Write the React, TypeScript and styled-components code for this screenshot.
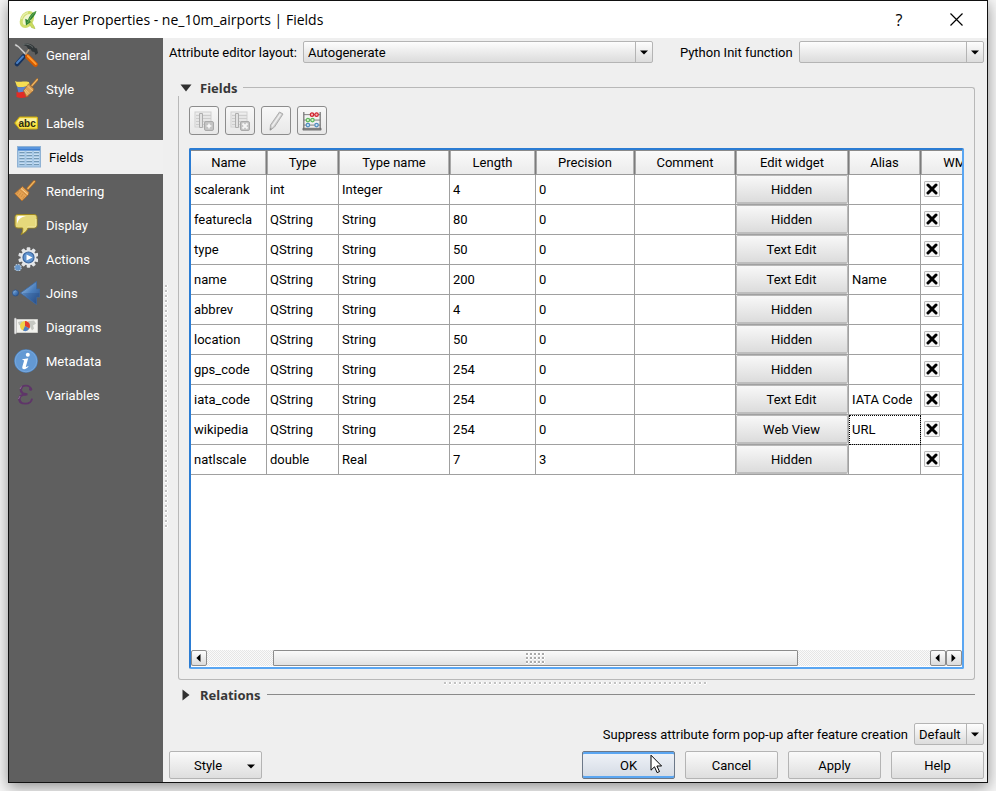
import React from "react";
import styled, { createGlobalStyle, css } from "styled-components";

const GlobalStyle = createGlobalStyle`
  *, *::before, *::after { box-sizing: border-box; }
  body {
    margin: 0;
    background: #f6f6f6;
    color: #000;
    font: 13px/16px Roboto, "Noto Sans", sans-serif;
  }
  button, select, input { font: inherit; color: inherit; margin: 0; }
`;

const raised = "linear-gradient(#fdfdfd, #ececec 50%, #dcdcdc)";

const Desktop = styled.div`
  display: flex;
  min-height: 100vh;
  padding: 0 8px 8px;
`;

const Dialog = styled.main`
  flex: 1;
  min-width: 0;
  display: flex;
  flex-direction: column;
  border: 1px solid #111;
  background: #efefef;
  box-shadow: 0 4px 14px rgba(0, 0, 0, 0.42);
`;

const TitleBar = styled.header`
  display: flex;
  align-items: center;
  height: 37px;
  padding: 0 8px 0 10px;
  background: #fff;
`;

const Title = styled.h1`
  flex: 1;
  margin: 0 0 0 6px;
  font: 14px/20px "Open Sans", sans-serif;
`;

const TitleButton = styled.button`
  display: grid;
  place-items: center;
  width: 68px;
  height: 36px;
  padding: 0;
  border: 0;
  background: none;
  font: 16px/20px "Open Sans", sans-serif;
  &:last-child { width: 46px; }
`;

const Body = styled.div`
  flex: 1;
  display: flex;
  min-height: 0;
`;

const Sidebar = styled.nav`
  flex: none;
  width: 154px;
  background: #5f5f5f;
`;

const NavItem = styled.a<{ $active?: boolean }>`
  display: grid;
  grid-template-columns: 24px 1fr;
  align-items: center;
  gap: 8px;
  height: 34px;
  padding-left: ${(p) => (p.$active ? 8 : 5)}px;
  background: ${(p) => (p.$active ? "#f0f0f0" : "transparent")};
  color: ${(p) => (p.$active ? "#000" : "#fff")};
  line-height: 18px;
  text-decoration: none;
  svg { justify-self: center; }
`;

const NavText = styled.span`
  padding-top: 2px;
`;

const dotted = css`
  background-image: radial-gradient(circle at 1px 1px, #c2c2c2 1px, #fff 1px, #fff 2px, transparent 2px);
  background-size: 5px 5px;
`;

const SideGrip = styled.div`
  flex: none;
  align-self: center;
  width: 3px;
  height: 244px;
  margin: 0 1px 6px 2px;
  ${dotted}
`;

const BottomGrip = styled.div`
  align-self: center;
  width: 264px;
  height: 3px;
  margin: 2px 2px 2px 0;
  ${dotted}
`;

const Content = styled.div`
  flex: 1;
  min-width: 0;
  display: flex;
  flex-direction: column;
  padding: 3px 3px 3px 0;
`;

const OptionRow = styled.div`
  display: flex;
  align-items: center;
`;

const Label = styled.label`
  flex: none;
  margin-right: 6px;
  padding-top: 2px;
  white-space: nowrap;
`;

const OptionGap = styled.div`
  width: 27px;
`;

const ComboFrame = styled.div<{ $grow: number }>`
  display: grid;
  flex: ${(p) => (p.$grow ? `${p.$grow} 1 0` : "none")};
  width: ${(p) => (p.$grow ? "auto" : "70px")};
  height: 22px;
  border: 1px solid #b4b4b4;
  border-radius: 2px;
  background: ${raised};
`;

const ComboSelect = styled.select`
  grid-area: 1 / 1;
  min-width: 0;
  height: 20px;
  padding: 2px 18px 0 4px;
  border: 0;
  background: none;
  appearance: none;
`;

const ComboArrow = styled.span`
  grid-area: 1 / 1;
  justify-self: end;
  display: grid;
  place-items: center;
  width: 17px;
  border-left: 1px solid #b4b4b4;
  pointer-events: none;
`;

const ArrowDown = () => (
  <svg width="8" height="5" viewBox="0 0 8 5"><path d="M0 .5h8L4 4.6z" /></svg>
);

function Combo({ id, value, grow = 0 }: { id: string; value: string; grow?: number }) {
  return (
    <ComboFrame $grow={grow}>
      <ComboSelect id={id} defaultValue={value}><option>{value}</option></ComboSelect>
      <ComboArrow><ArrowDown /></ComboArrow>
    </ComboFrame>
  );
}

const FieldsGroup = styled.section`
  flex: 1;
  min-height: 0;
  display: flex;
  flex-direction: column;
  margin: 17px 9px 0;
`;

const GroupHeader = styled.div`
  display: flex;
  align-items: center;
  height: 16px;
`;

const GroupToggle = styled.button`
  display: flex;
  align-items: center;
  gap: 8px;
  height: 16px;
  padding: 0 6px 0 2px;
  border: 0;
  background: none;
  font: bold 13px/16px "Noto Sans", sans-serif;
  color: #383838;
`;

const GroupRule = styled.span<{ $dark?: boolean }>`
  flex: 1;
  align-self: flex-start;
  height: 9px;
  margin-top: 7px;
  border-top: 1px solid ${(p) => (p.$dark ? "#8a8a8a" : "#b8b8b8")};
  border-right: ${(p) => (p.$dark ? "0" : "1px solid #b8b8b8")};
  border-top-right-radius: ${(p) => (p.$dark ? 0 : 3)}px;
`;

const GroupBody = styled.div`
  flex: 1;
  min-height: 0;
  display: flex;
  flex-direction: column;
  padding: 10px;
  border: 1px solid #b8b8b8;
  border-top: 0;
  border-radius: 0 0 3px 3px;
`;

const Toolbar = styled.div`
  display: flex;
  gap: 6px;
  margin-bottom: 13px;
`;

const ToolButton = styled.button`
  display: grid;
  place-items: center;
  width: 30px;
  height: 29px;
  padding: 0;
  border: 1px solid #8c8c8c;
  border-radius: 3px;
  background: linear-gradient(#f8f8f8, #e8e8e8);
`;

const TableFrame = styled.div`
  flex: 1;
  min-height: 0;
  display: flex;
  flex-direction: column;
  border: 2px solid #5aa6f2;
  border-top-color: #2b7cd3;
  border-left-color: #2b7cd3;
  border-radius: 2px;
  background: #fff;
`;

const TableViewport = styled.div`
  flex: 1;
  min-height: 0;
  overflow: hidden;
`;

const Table = styled.table`
  table-layout: fixed;
  width: 806px;
  border-collapse: separate;
  border-spacing: 0;
`;

const HeadCell = styled.th<{ $width: number }>`
  width: ${(p) => p.$width}px;
  height: 25px;
  padding: 0;
  border-top: 1px solid #8a8a8a;
  border-right: 1px solid #7c7c7c;
  border-bottom: 1px solid #9a9a9a;
  background: linear-gradient(#fafafa, #ebebeb);
  box-shadow: inset -1px 0 #b0b0b0, inset 1px 0 #a8a8a8;
  font-weight: 400;
  &:first-child { box-shadow: inset -1px 0 #b0b0b0; }
`;

const Cell = styled.td<{ $focused?: boolean; $flush?: boolean }>`
  height: 30px;
  padding: ${(p) => (p.$flush ? 0 : "0 3px")};
  border-right: 1px solid #a0a0a0;
  border-bottom: 1px solid #a0a0a0;
  outline: ${(p) => (p.$focused ? "1px dotted #000" : "none")};
  outline-offset: -1px;
  white-space: nowrap;
`;

const WidgetButton = styled.button`
  display: block;
  width: 100%;
  height: 29px;
  padding: 2px 1px 0 0;
  border: 1px solid #b8b8b8;
  border-bottom: 2px solid #bdbdbd;
  border-radius: 2px;
  background: linear-gradient(#f8f8f8, #eaeaea 50%, #dcdcdc);
`;

const TickFrame = styled.span`
  display: grid;
  width: 16px;
  height: 16px;
  margin-bottom: 2px;
  svg { grid-area: 1 / 1; place-self: center; visibility: hidden; pointer-events: none; }
  input:checked + svg { visibility: visible; }
`;

const TickBox = styled.input`
  grid-area: 1 / 1;
  width: 16px;
  height: 16px;
  appearance: none;
  border: 1px solid #bcbcbc;
  border-radius: 1px;
  background: #f6f6f6;
`;

const ScrollBar = styled.div`
  flex: none;
  display: flex;
  height: 16px;
  margin-bottom: 1px;
  background: repeating-conic-gradient(#e6e6e6 0 25%, #fafafa 0 50%) 0 0 / 2px 2px;
`;

const ScrollButton = styled.button`
  display: grid;
  place-items: center start;
  width: 16px;
  padding: 0 0 0 4px;
  border: 1px solid #8c8c8c;
  border-radius: 2px;
  background: ${raised};
`;

const ScrollTrack = styled.div<{ $grow: number }>`
  flex: ${(p) => p.$grow} 1 0;
`;

const ScrollThumb = styled.div`
  display: grid;
  place-items: center;
  flex: 525 1 0;
  border: 1px solid #8c8c8c;
  border-radius: 1px;
  background: linear-gradient(#fafafa, #e2e2e2);
`;

const ThumbGrip = styled.span`
  width: 19px;
  height: 11px;
  background-image: radial-gradient(circle at 1px 1px, #aaa 1px, #fff 1px, #fff 2px, transparent 2px);
  background-size: 4px 4px;
`;

const RelationsGroup = styled.section`
  margin: 0 9px 20px;
`;

const SuppressRow = styled(OptionRow)`
  justify-content: flex-end;
  margin-bottom: 6px;
`;

const Footer = styled.footer`
  display: flex;
  gap: 10px;
`;

const PushButton = styled.button<{ $primary?: boolean }>`
  display: flex;
  align-items: center;
  justify-content: center;
  width: 93px;
  height: 28px;
  padding: 2px 0 0;
  border: 1px solid ${(p) => (p.$primary ? "#6c7888" : "#b4b4b4")};
  border-radius: 2px;
  background: ${(p) => (p.$primary ? "linear-gradient(#f0f3f8, #d3dae4)" : "linear-gradient(#fafafa, #ececec 50%, #dedede)")};
  box-shadow: ${(p) => (p.$primary ? "inset 0 2px #5aa6f2, inset 0 -2px #5aa6f2" : "none")};
`;

const MenuButton = styled(PushButton)`
  margin-right: auto;
  justify-content: space-between;
  padding: 2px 6px 0 24px;
`;

const PointerLayer = styled.svg`
  position: absolute;
  right: 12px;
  top: 3px;
  pointer-events: none;
`;

const PointerHost = styled.span`
  position: relative;
  display: flex;
`;

/* ---------- icons ---------- */

const Icon = ({ children, size = 24 }: { children: React.ReactNode; size?: number }) => (
  <svg width={size} height={size} viewBox="0 0 24 24" fill="none" aria-hidden="true">{children}</svg>
);

const AppIcon = () => (
  <svg width="18" height="20" viewBox="0 0 18 20" fill="none" aria-hidden="true">
    <path d="M10.500 2.500C6 2.500 2.500 6.500 2.200 11.500c-.2 3 1.300 5 4 5 4 0 7.300-4.500 7.500-9.500.1-2.800-1-4.500-3.200-4.500z" fill="#f2f6cf" stroke="#cfde6c" strokeWidth="3" />
    <path d="M2.500 9C3.500 5.500 6 3.200 9 2.600" stroke="#e6eeae" strokeWidth="1.400" />
    <path d="M9.500 12.500l3 5 3.500 1.200-1-2.500-2.500-4z" fill="#cbdc5e" stroke="#a9be45" strokeWidth=".6" />
    <path d="M17.500 1C13.500 2 10.500 5.500 9 10L6.200 8.700 7 15.500l5-3.800-1.500-.7C13.500 8.500 16.500 5 17.500 1z" fill="#2f8434" />
    <path d="M17 1.500C13.500 4 11 7.500 8.500 13" stroke="#83bb62" strokeWidth=".7" />
  </svg>
);

const GeneralIcon = () => (
  <Icon>
    <path d="M1.500 1l3 2 9 9-1 1L4 4 1 2.500z" fill="#e8e8e8" stroke="#aaa" strokeWidth=".5" />
    <path d="M8 1.500C12-.3 17 0 20 3.500l1 1.500 2 .5 1 4.500-2.500 2-1-3-2.500-.5-1.500-2.500-2 .2-2-3z" fill="#303638" />
    <path d="M8.500 1.500c4-1 7.500 0 10.500 3" stroke="#69706f" />
    <path d="M15 6.500L11 12" stroke="#b8a080" strokeWidth="1.600" />
    <path d="M9.500 13.500l-6.500 7.500" stroke="#16335f" strokeWidth="4.600" strokeLinecap="round" />
    <path d="M9 13.500l-6 6.500" stroke="#4a80c4" strokeWidth="2" strokeLinecap="round" />
    <path d="M13.500 13.500l8 8" stroke="#d45a00" strokeWidth="4.600" strokeLinecap="round" />
    <path d="M13.800 13l8 8" stroke="#ff9a2e" strokeWidth="1.800" strokeLinecap="round" />
  </Icon>
);

const StyleIcon = () => (
  <Icon>
    <path d="M1 4c4 2 7-.5 14 1l1 5c-5-2-9 2-13-.5z" fill="#f5dd52" />
    <path d="M3 9.500c4 2.500 8-1.500 12 .5l-1 6c-4-1-6 1-9.500 0z" fill="#5b83cf" />
    <path d="M2.500 15c4 1.500 6-1.500 10 0l2 4.500c-4 1.500-8 2-12 .5z" fill="#e32b25" />
    <path d="M23.300 2.500L18 8.500" stroke="#a9692b" strokeWidth="2.600" strokeLinecap="round" />
    <path d="M23.300 2.500L18 8.500" stroke="#edb764" strokeWidth="1.200" strokeLinecap="round" />
    <path d="M14.500 7l5.500 5-1.500 2.500-6 5.500-3-6.500z" fill="#dda154" stroke="#9c642a" strokeWidth=".7" />
    <path d="M13.500 9l5.500 5M11.500 12.500l3.500 4M10.500 13.500l3 4" stroke="#f4cc8a" strokeWidth=".8" />
  </Icon>
);

const LabelsIcon = () => (
  <Icon>
    <path d="M.7 12L5.500 6H22.500c.7 0 1 .3 1 1v10c0 .7-.3 1-1 1H5.500z" fill="#f5df46" stroke="#c9a80e" />
    <path d="M6 7.300h16.300v4.200H3z" fill="#fbf09a" />
    <text x="4.500" y="15.500" fontFamily="Liberation Sans, sans-serif" fontWeight="bold" fontSize="10" fill="#2c2a12">abc</text>
  </Icon>
);

const FieldsIcon = () => (
  <Icon>
    <rect x=".5" y="1.500" width="23" height="20.500" fill="#a9c9e6" stroke="#8fb2d4" />
    <rect x="1" y="2" width="22" height="3.500" fill="#3f7fd0" />
    <path d="M1 3h22" stroke="#77aeea" />
    {[7.5, 10.500, 13.500, 16.500, 19.500].map((y) => (
      <React.Fragment key={y}>
        <path d={`M2.500 ${y - 1}h5M9.500 ${y - 1}h5.500M17 ${y - 1}h5`} stroke="#c8def1" />
        <path d={`M2.500 ${y}h5M9.500 ${y}h5.500M17 ${y}h5`} stroke="#7599b5" />
      </React.Fragment>
    ))}
  </Icon>
);

const BroomIcon = () => (
  <Icon>
    <path d="M20.300 2.500L14 9.500" stroke="#a9692b" strokeWidth="3" strokeLinecap="round" />
    <path d="M20.300 2.500L14 9.500" stroke="#f0b55c" strokeWidth="1.400" strokeLinecap="round" />
    <path d="M8.500 7.500l6.500 6-1 2.500-6 6L.7 14.500z" fill="#e5a252" stroke="#a9692b" strokeWidth=".8" />
    <path d="M5 12l-2 3M7 13.500l-2 3M9 15l-2 3M10.500 17l-2 3.500" stroke="#c98a40" strokeWidth=".8" />
    <path d="M7 9.500l7 6" stroke="#f8d396" />
    <path d="M6 10.700l7 6" stroke="#b87838" strokeWidth=".6" />
  </Icon>
);

const DisplayIcon = () => (
  <Icon>
    <path d="M4 1.500h16c2 0 3 1 3 3V12c0 2-1 3-3 3h-6c-1 3-3 5-7 6.500 1.500-2 2-4 1.700-6.500H4c-2 0-3-1-3-3V4.500c0-2 1-3 3-3z" fill="#e6d97b" stroke="#9c8520" />
    <path d="M3 11V5c0-1.500.6-2 2-2h7C7 4 4.500 6 3 11z" fill="#fff" />
    <path d="M13.500 14h6.500c1.300 0 2-.7 2-2V6" stroke="#f2e9a8" />
  </Icon>
);

const teeth = Array.from({ length: 10 }, (_, i) => i * 36);

const ActionsIcon = () => (
  <Icon>
    {teeth.map((a) => (
      <rect key={a} x="12.700" y=".2" width="3.600" height="5" rx="1" fill="#e3e5e7" transform={`rotate(${a} 14.500 10.500)`} />
    ))}
    <circle cx="14.500" cy="10.500" r="7.800" fill="#e6e8ea" />
    <circle cx="14.500" cy="10.500" r="5.500" fill="#5f93cf" stroke="#3c659c" strokeWidth="1.200" />
    <path d="M12.500 7.500l6 3-6 3z" fill="#fff" />
    <circle cx="3.900" cy="20.700" r="3.200" fill="#7ea7d0" stroke="#c2cdd8" strokeWidth="1.300" strokeDasharray="1.400 1.100" />
    <circle cx="3.900" cy="20.700" r="2.600" fill="#6695c8" />
  </Icon>
);

const JoinsIcon = () => (
  <svg width="28" height="24" viewBox="0 0 28 24" fill="none" aria-hidden="true">
    <defs>
      <linearGradient id="join" x1="0" y1="0" x2="1" y2="1">
        <stop stopColor="#a9cbed" /><stop offset=".5" stopColor="#4b7fbd" /><stop offset="1" stopColor="#264d8a" />
      </linearGradient>
    </defs>
    <circle cx="3.500" cy="12" r="3" fill="url(#join)" stroke="#284f86" strokeWidth=".8" />
    <path d="M8.500 12L24.500.5V8h3v8h-3v7.500z" fill="url(#join)" stroke="#3b6aa5" strokeWidth=".8" />
    <path d="M10 12h17.500v4h-3v7z" fill="#203f75" opacity=".25" />
  </svg>
);

const DiagramsIcon = () => (
  <Icon>
    <path d="M2.500 4.500h21v13h-21z" fill="#f2f2ee" stroke="#cfcfcb" />
    <path d="M4 7l4-1 2 2-2 3-3-1zM14 6l6-.5 2 3-3 2 1 3-2 2-2-4-2-2z" fill="#c6c8c2" />
    <rect x=".3" y="3" width="2" height="16" rx="1" fill="#eee" stroke="#aaa" strokeWidth=".5" />
    <circle cx="11" cy="11" r="5" fill="#efd34a" />
    <path d="M11 11V6A5 5 0 0 1 15.300 13.500z" fill="#e23c2e" />
    <path d="M11 11l4.300 2.500a5 5 0 0 1-6.300 2.100z" fill="#4e7fc4" />
  </Icon>
);

const MetadataIcon = () => (
  <Icon>
    <circle cx="12" cy="12" r="11.800" fill="#4d86c6" />
    <circle cx="12" cy="12" r="10.800" fill="#6399d4" stroke="#8bb5e2" strokeWidth=".6" />
    <circle cx="13.800" cy="5.800" r="2" fill="#fff" />
    <path d="M8.500 10.200l5.700-.9-2.300 8.200c-.2.900.7.700 2.200-.5l.4.600c-1.600 1.800-3 2.600-4.300 2.600-1.700 0-2.300-1-1.800-2.800l1.600-5.500c.2-.8-.5-1-1.700-1z" fill="#fff" />
  </Icon>
);

const VariablesIcon = () => (
  <Icon>
    <path d="M17 6.500C16.500 3.800 14.500 2.700 12 2.700 9 2.700 7 4.300 7 6.800c0 2.700 2 4.200 5.500 4.200M12.500 11.500C8 11.500 5.300 13 5.300 16c0 3 2.700 4.600 6 4.600 3.700 0 6.300-1.800 6.700-5" stroke="#5f3569" strokeWidth="1.800" />
    <path d="M8.200 4C6.700 5.500 6.500 8 8.200 10M6.500 13c-1.700 2-1.400 4.700.5 6.300" stroke="#5f3569" strokeWidth="2.200" />
    <path d="M10 11.300h3.500" stroke="#5f3569" strokeWidth="2" />
    <path d="M6 6l1.500-2.500M4.500 16l1.500-3" stroke="#a58aac" strokeWidth=".7" />
    <circle cx="16.600" cy="6.200" r="1.600" fill="#5f3569" />
  </Icon>
);

const TableGlyph = ({ remove = false }: { remove?: boolean }) => (
  <svg width="20" height="20" viewBox="0 0 20 20" fill="none" aria-hidden="true">
    <rect x="1" y="1" width="16" height="15" fill="#eee" stroke="#d0d0d0" />
    <path d="M2 4.500h15M2 7.500h15M2 10.500h15M2 13.500h15" stroke="#cdcdcd" strokeWidth="1.600" />
    <path d="M5.500 2.500h3v14h-3z" fill="#e2e2e2" stroke="#aeaeae" />
    <rect x="10.500" y="10.500" width="9" height="9" rx="1.500" fill="#c4c4c4" stroke="#aaa" />
    {remove
      ? <path d="M12.500 12.500l5 5M17.500 12.500l-5 5" stroke="#f5f5f5" strokeWidth="1.800" />
      : <path d="M15 11.800l1 2.200 2.200 1-2.200 1-1 2.200-1-2.200-2.200-1 2.200-1z" fill="#f8f8f8" />}
  </svg>
);

const PencilGlyph = () => (
  <svg width="20" height="20" viewBox="0 0 20 20" fill="none" aria-hidden="true">
    <path d="M13.500 1l3.500 2L8.500 16 4 19.300 4.500 14z" fill="#cecece" stroke="#adadad" />
    <path d="M14.500 3L6 15.500" stroke="#efefef" strokeWidth="1.400" />
    <path d="M4 19.300l.3-2.300 1.700.9z" fill="#8c8c8c" />
  </svg>
);

const AbacusGlyph = () => (
  <svg width="20" height="20" viewBox="0 0 22 22" fill="none" aria-hidden="true">
    <path d="M2 1v19M20 1v19" stroke="#6e6e6e" strokeWidth="1.300" />
    <path d="M2 4h18M2 10h18M2 15.500h18" stroke="#777" />
    <path d="M1 19h20v2H1z" fill="#8a8a8a" stroke="#5c5c5c" strokeWidth=".7" />
    <g strokeWidth="1.300">
      <circle cx="11" cy="4" r="1.900" fill="#f7b8b8" stroke="#d0202c" /><circle cx="16" cy="4" r="1.900" fill="#f7b8b8" stroke="#d0202c" />
      <circle cx="6.500" cy="10" r="1.900" fill="#d5f1d0" stroke="#5fb85c" /><circle cx="11.500" cy="10" r="1.900" fill="#d5f1d0" stroke="#5fb85c" />
      <circle cx="6.500" cy="15.500" r="1.900" fill="#cfe5f7" stroke="#4f8dc0" /><circle cx="16" cy="15.500" r="1.900" fill="#cfe5f7" stroke="#4f8dc0" />
    </g>
  </svg>
);

const TickMark = () => (
  <svg width="12" height="12" viewBox="0 0 12 12"><path d="M2 2l8 8M10 2l-8 8" stroke="#000" strokeWidth="3" strokeLinecap="round" /></svg>
);

const SideArrow = ({ right = false }: { right?: boolean }) => (
  <svg width="5" height="8" viewBox="0 0 5 8"><path d={right ? "M.5 0v8L4.600 4z" : "M4.500 0v8L.4 4z"} /></svg>
);

const MousePointer = () => (
  <PointerLayer width="13" height="21" viewBox="0 0 13 21">
    <path d="M1 1.200v15l3.500-3.400 2.600 5.800 2.400-1-2.600-5.600h4.700z" fill="#fff" stroke="#000" />
  </PointerLayer>
);

/* ---------- data ---------- */

const pages = [
  { name: "General", icon: <GeneralIcon /> },
  { name: "Style", icon: <StyleIcon /> },
  { name: "Labels", icon: <LabelsIcon /> },
  { name: "Fields", icon: <FieldsIcon /> },
  { name: "Rendering", icon: <BroomIcon /> },
  { name: "Display", icon: <DisplayIcon /> },
  { name: "Actions", icon: <ActionsIcon /> },
  { name: "Joins", icon: <JoinsIcon /> },
  { name: "Diagrams", icon: <DiagramsIcon /> },
  { name: "Metadata", icon: <MetadataIcon /> },
  { name: "Variables", icon: <VariablesIcon /> },
];

const columns: [string, number][] = [
  ["Name", 76], ["Type", 72], ["Type name", 111], ["Length", 86], ["Precision", 99],
  ["Comment", 101], ["Edit widget", 113], ["Alias", 72], ["WMS", 76],
];

const fields = [
  ["scalerank", "int", "Integer", "4", "0", "", "Hidden", ""],
  ["featurecla", "QString", "String", "80", "0", "", "Hidden", ""],
  ["type", "QString", "String", "50", "0", "", "Text Edit", ""],
  ["name", "QString", "String", "200", "0", "", "Text Edit", "Name"],
  ["abbrev", "QString", "String", "4", "0", "", "Hidden", ""],
  ["location", "QString", "String", "50", "0", "", "Hidden", ""],
  ["gps_code", "QString", "String", "254", "0", "", "Hidden", ""],
  ["iata_code", "QString", "String", "254", "0", "", "Text Edit", "IATA Code"],
  ["wikipedia", "QString", "String", "254", "0", "", "Web View", "URL"],
  ["natlscale", "double", "Real", "7", "3", "", "Hidden", ""],
];

function FieldsTable() {
  return (
    <TableFrame>
      <TableViewport>
        <Table>
          <thead>
            <tr>{columns.map(([name, width]) => <HeadCell key={name} $width={width} scope="col">{name}</HeadCell>)}</tr>
          </thead>
          <tbody>
            {fields.map((row) => (
              <tr key={row[0]}>
                {row.map((value, i) =>
                  i === 6 ? (
                    <Cell key={i} $flush><WidgetButton>{value}</WidgetButton></Cell>
                  ) : (
                    <Cell key={i} $focused={value === "URL"}>{value}</Cell>
                  )
                )}
                <Cell>
                  <TickFrame>
                    <TickBox type="checkbox" defaultChecked aria-label={`Publish ${row[0]} through WMS`} />
                    <TickMark />
                  </TickFrame>
                </Cell>
              </tr>
            ))}
          </tbody>
        </Table>
      </TableViewport>
      <ScrollBar>
        <ScrollButton aria-label="Scroll left"><SideArrow /></ScrollButton>
        <ScrollTrack $grow={66} />
        <ScrollThumb><ThumbGrip /></ScrollThumb>
        <ScrollTrack $grow={132} />
        <ScrollButton aria-label="Scroll left"><SideArrow /></ScrollButton>
        <ScrollButton aria-label="Scroll right"><SideArrow right /></ScrollButton>
      </ScrollBar>
    </TableFrame>
  );
}

export default function App() {
  return (
    <>
      <GlobalStyle />
      <Desktop>
        <Dialog>
          <TitleBar>
            <AppIcon />
            <Title>Layer Properties - ne_10m_airports | Fields</Title>
            <TitleButton aria-label="What's this?">?</TitleButton>
            <TitleButton aria-label="Close">
              <svg width="13" height="13" viewBox="0 0 13 13"><path d="M.5 .5l12 12M12.500 .5l-12 12" stroke="#000" strokeWidth="1.200" /></svg>
            </TitleButton>
          </TitleBar>
          <Body>
            <Sidebar>
              {pages.map((p) => (
                <NavItem key={p.name} href="#" $active={p.name === "Fields"}>
                  {p.icon}
                  <NavText>{p.name}</NavText>
                </NavItem>
              ))}
            </Sidebar>
            <SideGrip />
            <Content>
              <OptionRow>
                <Label htmlFor="layout">Attribute editor layout:</Label>
                <Combo id="layout" value="Autogenerate" grow={351} />
                <OptionGap />
                <Label htmlFor="init">Python Init function</Label>
                <Combo id="init" value="" grow={185} />
              </OptionRow>
              <FieldsGroup>
                <GroupHeader>
                  <GroupToggle aria-expanded="true">
                    <svg width="12" height="8" viewBox="0 0 12 8"><path d="M.5 .5h11L6 7.500z" fill="#303030" /></svg>
                    Fields
                  </GroupToggle>
                  <GroupRule />
                </GroupHeader>
                <GroupBody>
                  <Toolbar>
                    <ToolButton disabled aria-label="New column"><TableGlyph /></ToolButton>
                    <ToolButton disabled aria-label="Delete column"><TableGlyph remove /></ToolButton>
                    <ToolButton disabled aria-label="Toggle editing"><PencilGlyph /></ToolButton>
                    <ToolButton aria-label="Field calculator"><AbacusGlyph /></ToolButton>
                  </Toolbar>
                  <FieldsTable />
                </GroupBody>
              </FieldsGroup>
              <BottomGrip />
              <RelationsGroup>
                <GroupHeader>
                  <GroupToggle aria-expanded="false">
                    <svg width="12" height="12" viewBox="0 0 12 12"><path d="M2.500 .5v11L9.500 6z" fill="#303030" /></svg>
                    Relations
                  </GroupToggle>
                  <GroupRule $dark />
                </GroupHeader>
              </RelationsGroup>
              <SuppressRow>
                <Label htmlFor="suppress">Suppress attribute form pop-up after feature creation</Label>
                <Combo id="suppress" value="Default" />
              </SuppressRow>
              <Footer>
                <MenuButton>Style<ArrowDown /></MenuButton>
                <PointerHost><PushButton $primary>OK</PushButton><MousePointer /></PointerHost>
                <PushButton>Cancel</PushButton>
                <PushButton>Apply</PushButton>
                <PushButton>Help</PushButton>
              </Footer>
            </Content>
          </Body>
        </Dialog>
      </Desktop>
    </>
  );
}
